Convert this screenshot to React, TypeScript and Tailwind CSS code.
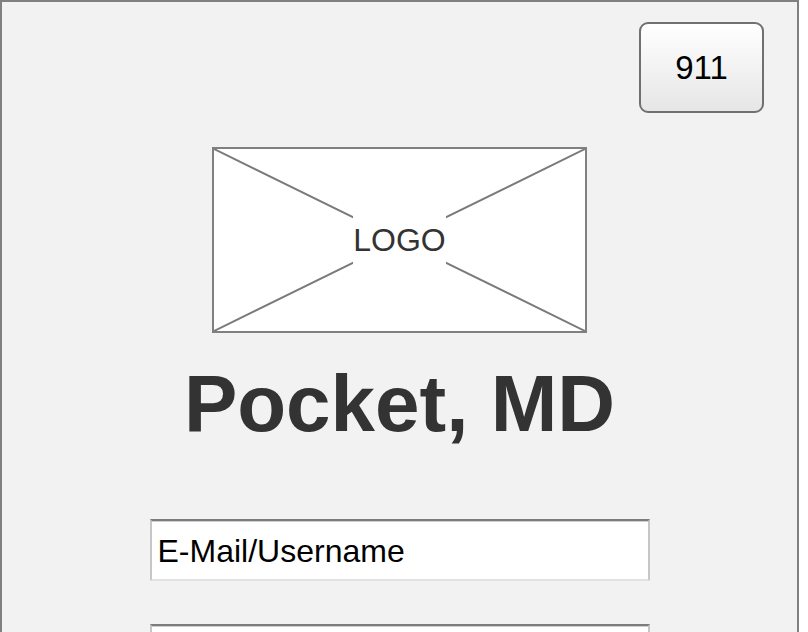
const sans = { fontFamily: '"Liberation Sans", Arial, sans-serif' };

const LogoBox = () => (
  <div className="relative w-[375px] h-[186px] border-2 border-[#808080] bg-white">
    <svg
      className="absolute inset-0 h-full w-full"
      viewBox="0 0 371 182"
      preserveAspectRatio="none"
    >
      <line x1="0" y1="0" x2="371" y2="182" stroke="#7a7a7a" strokeWidth="2" />
      <line x1="371" y1="0" x2="0" y2="182" stroke="#7a7a7a" strokeWidth="2" />
    </svg>
    <div className="absolute inset-0 flex items-center justify-center">
      <span className="bg-white text-[32px] leading-[48px] text-[#333]">LOGO</span>
    </div>
  </div>
);

const TextField = ({ placeholder }: { placeholder?: string }) => (
  <div className="w-[500px] h-[62px] bg-white border-2 border-t-[#7c7c7c] border-x-[#c6c6c6] border-b-[#e2e2e2] flex">
    <div className="flex-1 border-t border-t-[#cfcfcf] flex items-center pl-[6px] text-[32px] text-black">
      {placeholder}
    </div>
  </div>
);

export default function App() {
  return (
    <div
      className="w-[799px] h-[632px] overflow-hidden bg-[#f2f2f2] border-2 border-b-0 border-[#808080] flex flex-col"
      style={sans}
    >
      <div className="flex justify-end pt-[20px] pr-[33px]">
        <button className="w-[125px] h-[91px] rounded-[9px] border-2 border-[#707070] bg-gradient-to-b from-white to-[#e6e6e6] text-[33px] text-black">
          911
        </button>
      </div>
      <div className="flex flex-col items-center">
        <div className="mt-[34px]">
          <LogoBox />
        </div>
        <h1 className="mt-[31px] text-[80px] leading-[80px] font-bold text-[#333]">
          Pocket, MD
        </h1>
        <div className="mt-[75px] flex flex-col gap-[43px]">
          <TextField placeholder="E-Mail/Username" />
          <TextField />
        </div>
      </div>
    </div>
  );
}
